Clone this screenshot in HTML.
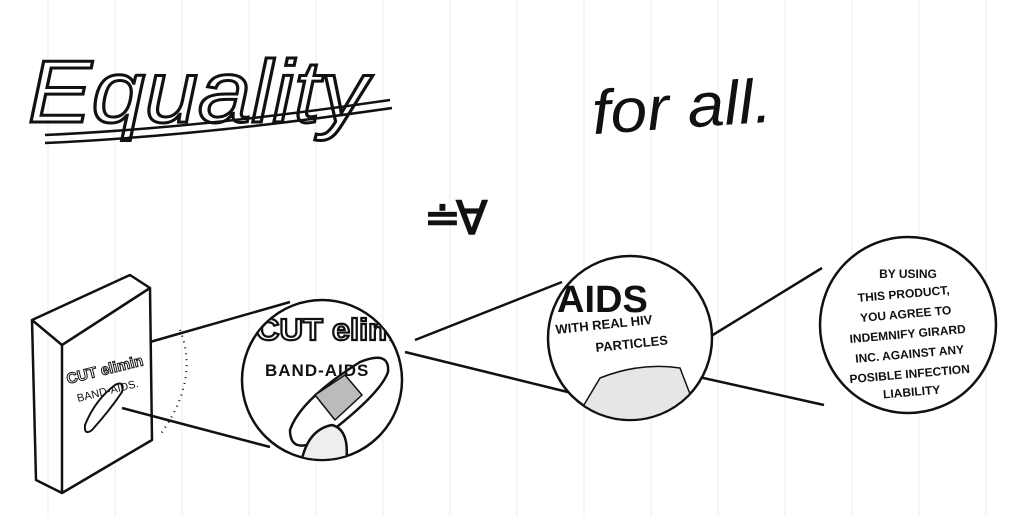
<!DOCTYPE html>
<html><head><meta charset="utf-8"><style>
html,body{margin:0;padding:0;background:#fff;}
svg{display:block;}
text{font-family:"Liberation Sans",sans-serif;}
</style></head><body>
<svg width="1024" height="516" viewBox="0 0 1024 516" xmlns="http://www.w3.org/2000/svg">
<defs>
<clipPath id="c1"><circle cx="322" cy="380" r="79"/></clipPath>
<clipPath id="c2"><circle cx="630" cy="338" r="81"/></clipPath>
</defs>
<rect width="1024" height="516" fill="#fff"/>
<g stroke="#ececec" stroke-width="1">
<line x1="48" y1="0" x2="48" y2="516"/><line x1="115" y1="0" x2="115" y2="516"/><line x1="182" y1="0" x2="182" y2="516"/><line x1="249" y1="0" x2="249" y2="516"/><line x1="316" y1="0" x2="316" y2="516"/><line x1="383" y1="0" x2="383" y2="516"/><line x1="450" y1="0" x2="450" y2="516"/><line x1="517" y1="0" x2="517" y2="516"/><line x1="584" y1="0" x2="584" y2="516"/><line x1="651" y1="0" x2="651" y2="516"/><line x1="718" y1="0" x2="718" y2="516"/><line x1="785" y1="0" x2="785" y2="516"/><line x1="852" y1="0" x2="852" y2="516"/><line x1="919" y1="0" x2="919" y2="516"/><line x1="986" y1="0" x2="986" y2="516"/>
</g>
<text x="28" y="122" font-family="DejaVu Serif" font-style="italic" font-size="88" fill="#fff" stroke="#111" stroke-width="3" textLength="340" lengthAdjust="spacingAndGlyphs">Equality</text>
<path d="M45 135 Q200 128 390 100" stroke="#111" stroke-width="2.5" fill="none"/>
<path d="M45 143 Q200 136 392 108" stroke="#111" stroke-width="2.5" fill="none"/>
<text x="592" y="128" font-family="Liberation Serif" font-style="italic" font-size="62" fill="#111" textLength="180" lengthAdjust="spacingAndGlyphs" transform="rotate(-4 680 110)">for all.</text>
<text x="424" y="232" font-size="44" font-weight="bold" fill="#111">≐</text>
<text x="456" y="234" font-family="DejaVu Sans" font-size="46" font-weight="bold" fill="#111">∀</text>
<g stroke="#111" stroke-width="2.5" fill="none" stroke-linejoin="round">
<path d="M32 320 L130 275 L150 288 L62 345 Z" fill="#fff"/>
<path d="M32 320 L36 480 L62 493 L62 345"/>
<path d="M62 345 L150 288 L152 440 L62 493"/>
<path d="M150 342 L290 302"/>
<path d="M122 408 L270 447"/>
<path d="M415 340 L562 282"/>
<path d="M405 352 L592 398"/>
<path d="M672 360 L822 268"/>
<path d="M690 375 L824 405"/>
<circle cx="322" cy="380" r="80" fill="#fff"/>
<circle cx="630" cy="338" r="82" fill="#fff"/>
<circle cx="908" cy="325" r="88" fill="#fff"/>
<path d="M180 330 Q200 380 160 435" stroke-dasharray="1 5" stroke-width="2"/>
<path d="M85 425 Q95 400 115 385 Q125 380 122 392 Q110 410 92 430 Q84 436 85 425Z" stroke-width="2"/>
<g clip-path="url(#c1)">
<path d="M290 430 Q300 400 360 362 Q390 350 388 372 Q380 395 320 440 Q290 455 290 430Z" fill="#fff"/>
<path d="M315 395 L345 375 L362 395 L335 420 Z" fill="#bbb" stroke-width="1.5"/>
<path d="M300 470 Q305 430 332 425 Q352 430 345 470" fill="#eee"/>
</g>
<g clip-path="url(#c2)">
<path d="M575 420 L600 378 Q640 362 680 368 L700 420 Z" fill="#e6e6e6" stroke-width="1.5"/>
</g>
</g>
<g clip-path="url(#c1)">
<text x="256" y="340" font-size="31" font-weight="bold" fill="#fff" stroke="#111" stroke-width="2.2" textLength="170" lengthAdjust="spacingAndGlyphs">CUT elimin</text>
</g>
<text x="265" y="376" font-size="17" font-weight="bold" fill="#111" letter-spacing="1">BAND-AIDS</text>
<text x="68" y="384" font-size="15" font-weight="bold" fill="#fff" stroke="#111" stroke-width="1" transform="rotate(-14 68 384)">CUT elimin</text>
<text x="78" y="402" font-size="11" fill="#111" transform="rotate(-14 78 402)">BAND-AIDS.</text>
<text x="557" y="312" font-size="38" font-weight="bold" fill="#111">AIDS</text>
<text x="556" y="334" font-size="13" font-weight="bold" fill="#111" transform="rotate(-6 556 334)">WITH REAL HIV</text>
<text x="596" y="352" font-size="13" font-weight="bold" fill="#111" transform="rotate(-6 596 352)">PARTICLES</text>
<g font-size="12" font-weight="bold" fill="#111" text-anchor="middle">
<text x="908" y="278">BY USING</text>
<text x="904" y="298" transform="rotate(-5 904 298)">THIS PRODUCT,</text>
<text x="906" y="318" transform="rotate(-5 906 318)">YOU AGREE TO</text>
<text x="908" y="338" transform="rotate(-5 908 338)">INDEMNIFY GIRARD</text>
<text x="910" y="358" transform="rotate(-5 910 358)">INC. AGAINST ANY</text>
<text x="910" y="378" transform="rotate(-5 910 378)">POSIBLE INFECTION</text>
<text x="912" y="396" transform="rotate(-5 912 396)">LIABILITY</text>
</g>
</svg>
</body></html>
